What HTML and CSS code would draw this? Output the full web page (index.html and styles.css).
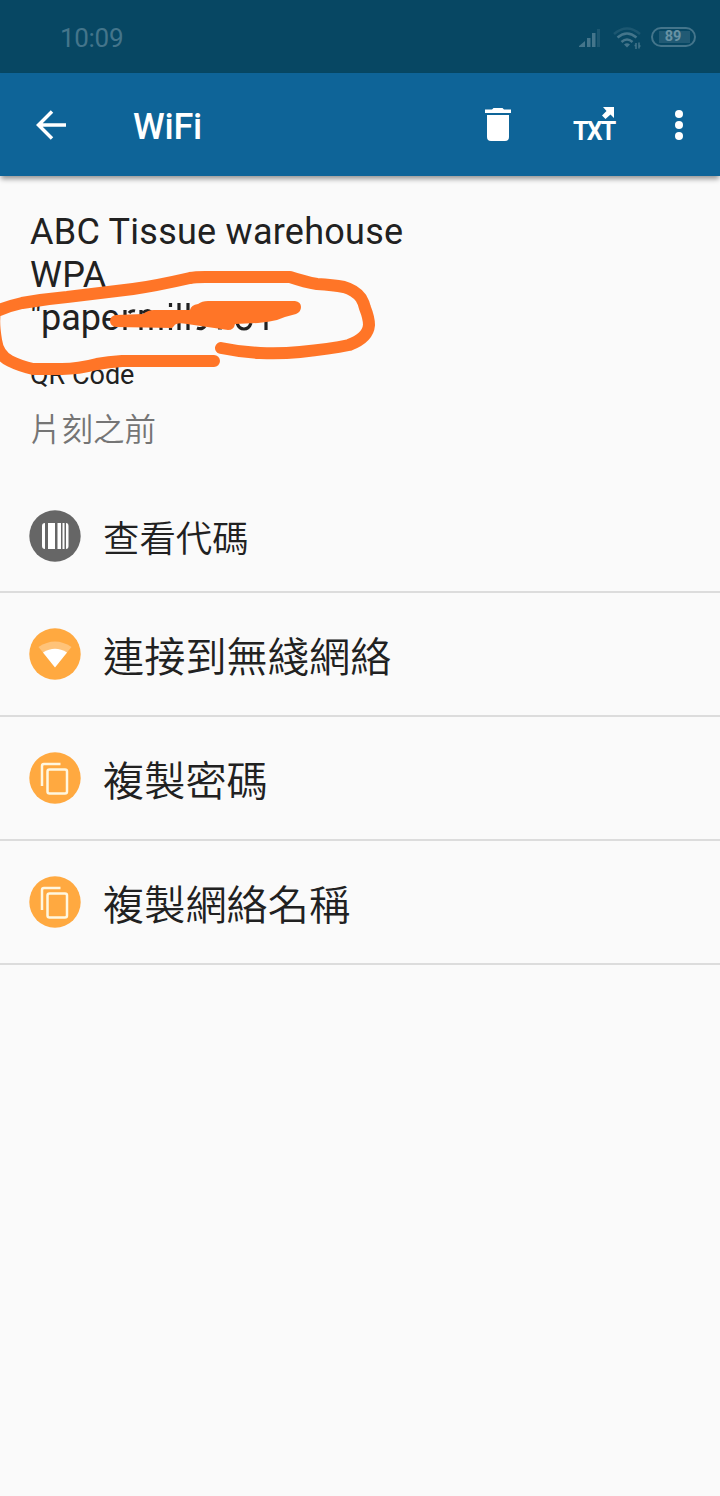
FILE: index.html
```
<!DOCTYPE html>
<html lang="zh-Hant">
<head>
	<meta charset="utf-8">
	<title>WiFi</title>
	<meta name="viewport" content="width=device-width, initial-scale=1">
	<link rel="stylesheet" href="styles.css">
</head>
<body>
	<div class="status-bar">
		<span class="clock">10:09</span>
		<svg class="signal" width="24" height="22" viewBox="0 0 24 22">
			<path d="M0 20V19L6 14V20zM8 11h3.500v9H8zM13 6h3.500v14H13z"/>
			<path class="faint" d="M18 2h3v18h-3z"/>
		</svg>
		<svg class="wifi" width="30" height="24" viewBox="0 0 30 24">
			<path class="faint arc" d="M1 8Q14 -3 27 8"/>
			<path class="arc" d="M4.500 11.500Q14 3.500 23.500 11.500M8.500 16Q14 11 19.500 16"/>
			<path d="M11 18.500Q14 16 17 18.500L14 21.500z"/>
			<path class="updown" d="M23 17v6M21.500 19.500h1.500M26 16.500v6M26 20h1.500"/>
		</svg>
		<div class="battery"><span class="level">89</span></div>
	</div>

	<header class="app-bar">
		<svg class="back" width="32" height="32" viewBox="0 0 32 32">
			<path d="M31 16H4M17 2.500L3.500 16l13.500 13.500"/>
		</svg>
		<h1>WiFi</h1>
		<svg class="trash" width="28" height="36" viewBox="0 0 28 36">
			<path d="M1 2.500h7l1.500-1.500h9l1.500 1.500h7V6H1zM3 8h22v22q0 4-4 4H7q-4 0-4-4z"/>
		</svg>
		<div class="txt">
			<svg width="12" height="12" viewBox="0 0 12 12">
				<path d="M1 0h11v11L8.500 7.500 3.500 12 0 8.500 4.500 4z"/>
			</svg>
			<span>TXT</span>
		</div>
		<svg class="more" width="10" height="32" viewBox="0 0 10 32">
			<circle cx="5" cy="5" r="4"/>
			<circle cx="5" cy="16" r="4"/>
			<circle cx="5" cy="27" r="4"/>
		</svg>
	</header>

	<main>
		<section class="details">
			<p class="name">ABC Tissue warehouse</p>
			<p class="name">WPA</p>
			<p class="name secret">"pape</p>
			<p class="format">QR Code</p>
			<p class="time">片刻之前</p>
		</section>

		<ul class="actions">
			<li class="small">
				<svg width="52" height="52" viewBox="0 0 52 52">
					<circle class="grey" cx="26" cy="26" r="25.700"/>
					<path class="fill" d="M16 13v26q-3 0-3-3V16q0-3 3-3zM19 13h7v26h-7zM28.500 13h3.500v26h-3.500zM33.500 13h2v26h-2zM37 13q2.500 0 2.500 3v20q0 3-2.500 3z"/>
				</svg>
				<span>查看代碼</span>
			</li>
			<li>
				<svg width="52" height="52" viewBox="0 0 52 52">
					<circle class="orange" cx="26" cy="26" r="25.700"/>
					<path class="fill half" d="M9.500 19Q26 8 42.500 19L26 39z"/>
					<path class="fill" d="M14 24.500Q26 17 38 24.500L26 39.500z"/>
				</svg>
				<span>連接到無綫網絡</span>
			</li>
			<li>
				<svg width="52" height="52" viewBox="0 0 52 52">
					<circle class="orange" cx="26" cy="26" r="25.700"/>
					<path class="line" d="M13 34V14q0-2 2-2h16.500"/>
					<rect class="line" x="18.500" y="17.500" width="19.500" height="24" rx="2"/>
				</svg>
				<span>複製密碼</span>
			</li>
			<li>
				<svg width="52" height="52" viewBox="0 0 52 52">
					<circle class="orange" cx="26" cy="26" r="25.700"/>
					<path class="line" d="M13 34V14q0-2 2-2h16.500"/>
					<rect class="line" x="18.500" y="17.500" width="19.500" height="24" rx="2"/>
				</svg>
				<span>複製網絡名稱</span>
			</li>
		</ul>
	</main>

	<!-- hand-drawn marker over the password -->
	<svg class="marker" width="400" height="130" viewBox="0 260 400 130">
		<path class="specks" d="M125 326v4M125 310v6M129 313q2-3 6-2M141 310v6M143 313q4-4 8-1M141 326v4M151 326v4M161 326v4M170.500 325v5M170.500 303v4M179 303v27M188 303v27M197 328q5 2 8-2M218 328h4M237 323q2 6 7 6t7-6M266 320v10"/>
		<path class="scribble" d="M116 315L143 314Q148 310 154 310H190Q191 305 198 304Q202 301 208 301H295Q301 302 301 307Q301 312 296 314Q287 316 277 320Q269 322 258 323L235 324Q234 330 228 330L187 324Q176 322 174 326L172 328L116 327Q110 326 110 321T116 315z"/>
		<path class="ring" d="M214 361H122Q108 362 97 364Q78 369 62 369H33Q20 366 10 361Q-2 355 -4 340Q-7 322 -5 312Q8 306 22 303Q45 299 67 297L133 289Q155 286 190 278Q195 277 205 277H290Q305 282 317 284Q333 285 344 287Q355 290 361 298Q364 303 365 308Q369 318 369 325Q368 338 349 345Q330 349 300 352Q280 354 260 353Q240 352 221 348"/>
	</svg>
</body>
</html>
```
FILE: styles.css
```
* { box-sizing: border-box; }

body {
  margin: 0;
  min-height: 1496px;
  position: relative;
  background: #fafafa;
  color: #212121;
  font-family: Roboto, "Noto Sans CJK TC", sans-serif;
}

h1, p, ul { margin: 0; padding: 0; font-weight: 400; }
svg { display: block; flex: none; }

.status-bar {
  display: flex;
  align-items: center;
  height: 73px;
  padding: 3px 24px 0 60px;
  background: #074763;
  color: #44758b;
  fill: #44758b;
}

.clock { flex: 1; font-size: 26px; letter-spacing: -.3px; }
.signal { margin-right: 10px; }
.wifi { margin-right: 8px; }
.faint { opacity: .35; }
.arc { fill: none; stroke: #44758b; stroke-width: 2.5; }
.updown { stroke: #44758b; stroke-width: 1.5; }

.battery {
  width: 45px;
  height: 20px;
  margin-top: -3px;
  padding: 2px 4px 2px 6px;
  border: 2px solid #44758b;
  border-radius: 10px;
}

.level {
  display: block;
  height: 12px;
  background: #215a74;
  color: #6892a4;
  font-size: 14.5px;
  font-weight: 700;
  line-height: 12px;
  text-align: center;
  text-indent: -3px;
}

.app-bar {
  display: flex;
  align-items: center;
  height: 103px;
  padding: 0 36px 0 35px;
  background: #0e6498;
  box-shadow: 0 4px 5px -1px rgba(0, 0, 0, .4);
  color: #fff;
  fill: #fff;
}

.back { fill: none; stroke: #fff; stroke-width: 3.5; }

h1 {
  flex: 1;
  padding: 4px 0 0 66px;
  font-size: 36px;
  font-weight: 500;
  letter-spacing: -.2px;
}

.trash { margin-left: 1px; }
.txt { width: 42px; margin: 0 59px 0 61px; }
.txt svg { margin: 2px 0 0 29px; }
.txt span { display: block; font-size: 25px; font-weight: 700; line-height: 25px; letter-spacing: -1.8px; }

.details { height: 298px; padding: 35px 30px 0; }
.name { font-size: 36px; line-height: 43px; letter-spacing: .25px; }
.secret { letter-spacing: -.1px; }
.format { margin-top: 19px; font-size: 27px; line-height: 32px; }
.time { margin-top: 17px; color: #757575; font-size: 31.5px; font-weight: 350; line-height: 46px; }

.actions { list-style: none; }

.actions li {
  display: flex;
  align-items: center;
  height: 124px;
  padding: 0 29px;
  border-bottom: 2px solid #dcdcdc;
  font-size: 41.200px;
  font-weight: 350;
}

.actions li.small { height: 119px; padding-top: 7px; font-size: 36.400px; }
.actions span { margin-left: 22px; padding-top: 8px; line-height: 50px; }

.grey { fill: #666; }
.orange { fill: #ffa940; }
.fill { fill: #fff; }
.half { opacity: .3; }
.line { fill: none; stroke: #fff7e0; stroke-width: 2.500; }

.marker { position: absolute; left: 0; top: 260px; }
.ring { fill: none; stroke: #ff7527; stroke-width: 12; stroke-linecap: round; stroke-linejoin: round; }
.scribble { fill: #ff7527; }
.specks { fill: none; stroke: #212121; stroke-width: 3.2; }
```
